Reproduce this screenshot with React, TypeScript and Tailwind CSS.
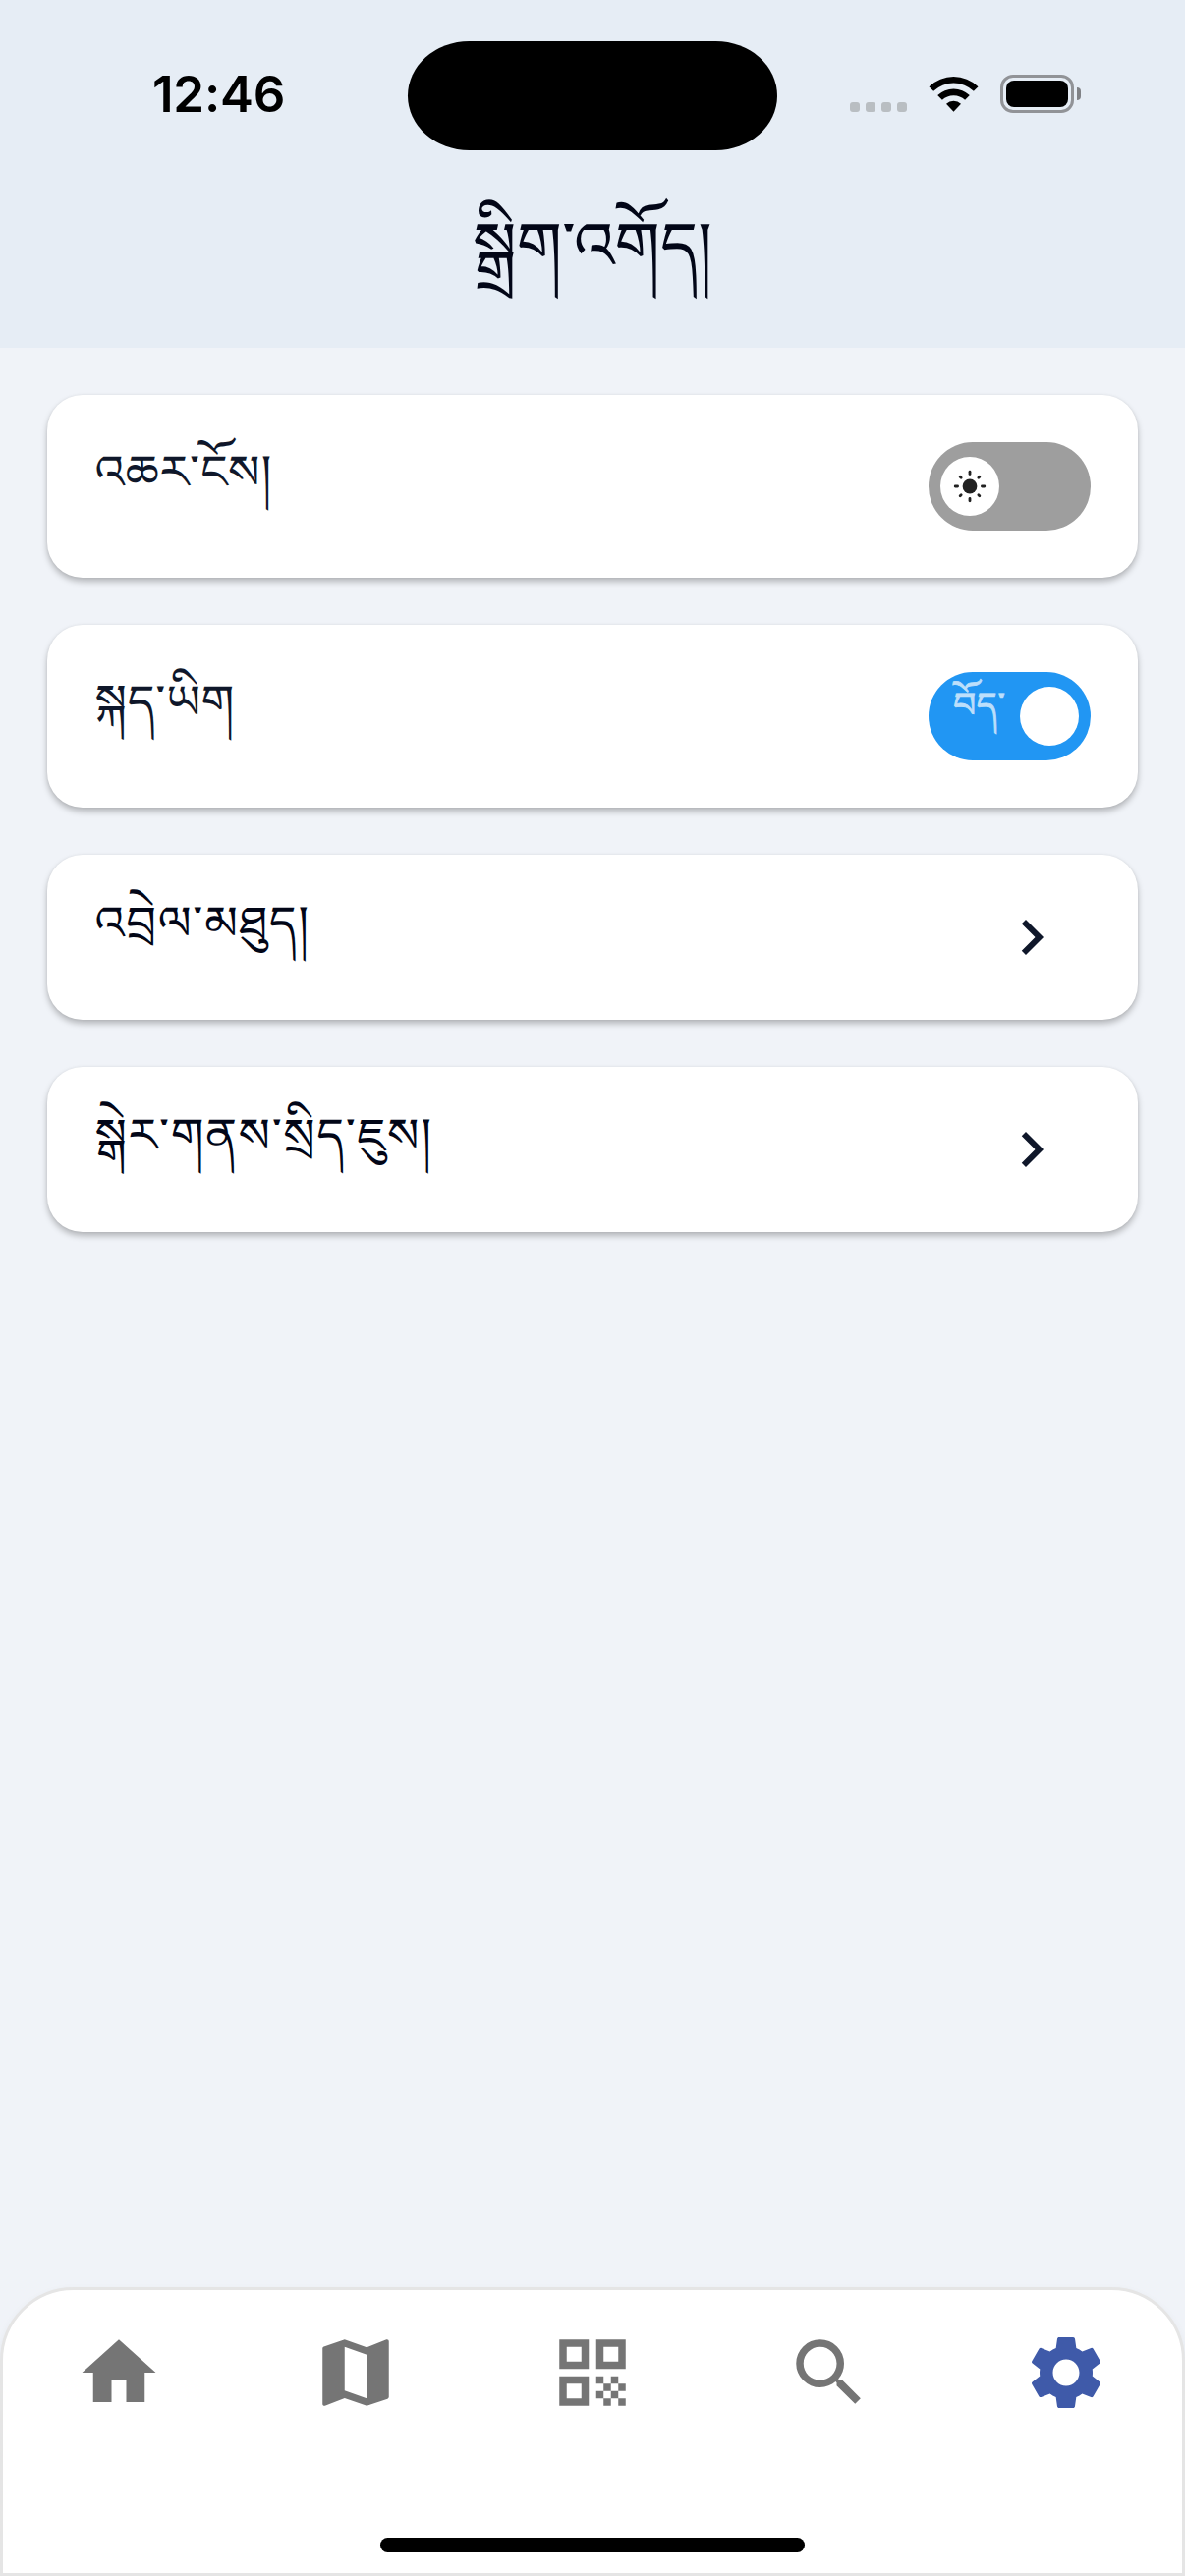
import { MdChevronRight, MdHome, MdMap, MdQrCode, MdSearch, MdSettings } from "react-icons/md";
import type { ReactNode } from "react";

const TIBETAN = "font-['Noto_Serif_Tibetan','Noto_Sans_Tibetan','Kailasa','Noto_Sans',serif]";

function StatusBar() {
  return (
    <div className="grid h-[177px] grid-cols-[415px_376px_1fr] pt-[41.500px]">
      <div className="pt-[21.500px] pl-[155px] font-['Inter'] text-[51px] leading-[66px] font-semibold tracking-[-0.2px] text-black">
        12:46
      </div>
      <div className="h-[111px] bg-black [border-radius:63px/56px]" />
      <div className="flex items-start pt-[34.500px] pl-[74px]">
        <div className="mt-[28px] flex gap-[6px]">
          <i className="size-[10px] rounded-[3px] bg-[#b9bec2]" />
          <i className="size-[10px] rounded-[3px] bg-[#b9bec2]" />
          <i className="size-[10px] rounded-[3px] bg-[#b9bec2]" />
          <i className="size-[10px] rounded-[3px] bg-[#b9bec2]" />
        </div>
        <svg className="mt-px ml-[22px] h-[37px] w-[51px]" viewBox="0 0 51 37">
          <path d="M0.5 11.2a36 36 0 0 1 50 0l-4.6 4.5a29.500 29.500 0 0 0-40.800 0z" />
          <path d="M9.200 20a23.500 23.500 0 0 1 32.600 0l-4.700 4.700a17 17 0 0 0-23.200 0z" />
          <path d="M18 28.700a11 11 0 0 1 15 0l-7.500 8z" />
        </svg>
        <div className="ml-[22px] flex items-center">
          <div className="h-[39px] w-[75px] rounded-[13px] border-[3px] border-[#919397] p-[3px]">
            <div className="h-full rounded-[8px] bg-black" />
          </div>
          <div className="ml-[3px] h-[13px] w-[4px] rounded-r-full bg-[#808286]" />
        </div>
      </div>
    </div>
  );
}

function Card({ label, dark, tall, children }: { label: string; dark?: boolean; tall?: boolean; children: ReactNode }) {
  return (
    <div
      className={`flex items-center justify-between rounded-[36px] bg-white pr-[48px] pl-[48.500px] shadow-[0_4px_6px_rgba(0,0,0,0.25),0_0_3px_rgba(0,0,0,0.06)] ${tall ? "h-[186px]" : "h-[168px]"}`}
    >
      <span className={`text-[48px] leading-[72px] whitespace-nowrap ${TIBETAN} ${dark ? "tracking-[1.6px] text-[#020617]" : "tracking-[0.75px] text-[#0f172a]"}`}>{label}</span>
      {children}
    </div>
  );
}

function SunIcon() {
  return (
    <svg className="size-[36px]" viewBox="-18 -18 36 36" stroke="#212121" strokeWidth="2.8" strokeLinecap="round">
      <circle r="7.400" fill="#212121" stroke="none" />
      {[0, 45, 90, 135, 180, 225, 270, 315].map((a) => (
        <path key={a} d={a % 90 === 0 ? "M0-12.400V-14.800" : "M0-12.500V-13.900"} transform={`rotate(${a})`} />
      ))}
    </svg>
  );
}

const NAV = [MdHome, MdMap, MdQrCode, MdSearch, MdSettings];

export default function App() {
  return (
    <div className="flex h-[2622px] w-[1206px] flex-col overflow-hidden bg-[#f0f3f8]">
      <header className="h-[354px] bg-[#e6edf5]">
        <StatusBar />
        <h1 className={`pt-[22px] text-center text-[66px] leading-[140px] text-[#020617] ${TIBETAN}`}>སྒྲིག་འགོད།</h1>
      </header>
      <main className="flex flex-1 flex-col gap-[48px] p-[48px]">
        <Card label="འཆར་ངོས།" tall>
          <div className="flex h-[90px] w-[165px] items-center rounded-full bg-[#9e9e9e] pl-[12px]">
            <div className="flex size-[60px] items-center justify-center rounded-full bg-white">
              <SunIcon />
            </div>
          </div>
        </Card>
        <Card label="སྐད་ཡིག" tall>
          <div className="flex h-[90px] w-[165px] items-center justify-between rounded-full bg-[#2196f3] pr-[12px] pl-[25px]">
            <span
              className={`mb-[2px] text-[36px] leading-[60px] tracking-[0.75px] whitespace-nowrap text-[#bcdffb] [-webkit-text-stroke:0.8px_#bcdffb] ${TIBETAN}`}
            >
              བོད་
            </span>
            <div className="size-[60px] rounded-full bg-white" />
          </div>
        </Card>
        <Card label="འབྲེལ་མཐུད།" dark>
          <MdChevronRight className="mr-[24px] size-[72px] text-[#0f172a]" />
        </Card>
        <Card label="སྒེར་གནས་སྲིད་ཇུས།" dark>
          <MdChevronRight className="mr-[24px] size-[72px] text-[#0f172a]" />
        </Card>
      </main>
      <nav className="flex h-[294px] flex-col items-center justify-between rounded-t-[75px] border-[3px] border-[#e5e5e5] bg-white pt-[39px] pb-[21px] shadow-[0_3px_9px_rgba(0,0,0,0.05)]">
        <div className="-mx-[3px] grid w-[1206px] grid-cols-5 justify-items-center">
          {NAV.map((Icon, i) => (
            <Icon key={i} className={i === 4 ? "size-[90px] text-[#3f5aa9]" : "size-[90px] text-[#757575]"} />
          ))}
        </div>
        <div className="h-[15px] w-[432px] rounded-full bg-black" />
      </nav>
    </div>
  );
}
